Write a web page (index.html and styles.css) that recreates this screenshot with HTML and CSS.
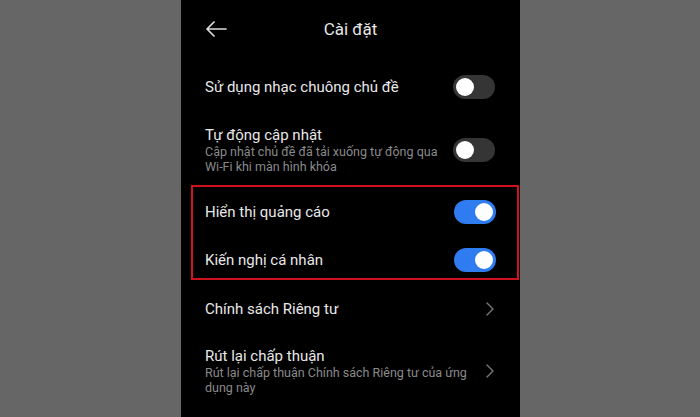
FILE: index.html
```html
<!DOCTYPE html>
<html lang="vi">
  <head>
    <meta charset="UTF-8" />
    <meta name="viewport" content="width=device-width, initial-scale=1.0" />
    <title>Cài đặt</title>
    <link rel="stylesheet" href="styles.css">
  </head>
  <body>
    <div class="screen"><!-- phone screen -->
      <div class="header">
        <svg class="back" width="22" height="16" viewBox="0 0 22 16">
          <path d="M21 8H2M9 1L2 8l7 7" fill="none" stroke="#dcdcdc" stroke-width="1.7" stroke-linecap="round" stroke-linejoin="round"/>
        </svg>
        <span class="title">Cài đặt</span>
      </div>

      <div class="row r1">
        <div class="text"><div class="name">Sử dụng nhạc chuông chủ đề</div></div>
        <span class="switch"></span>
      </div>

      <div class="row r2">
        <div class="text">
          <div class="name">Tự động cập nhật</div>
          <div class="desc">Cập nhật chủ đề đã tải xuống tự động qua<br>Wi-Fi khi màn hình khóa</div>
        </div>
        <span class="switch"></span>
      </div>

      <div class="mark"><!-- red highlight -->
        <div class="row small">
          <div class="text"><div class="name">Hiển thị quảng cáo</div></div>
          <span class="switch on"></span>
        </div>
        <div class="row small">
          <div class="text"><div class="name">Kiến nghị cá nhân</div></div>
          <span class="switch on"></span>
        </div>
      </div>

      <div class="row r3">
        <div class="text"><div class="name">Chính sách Riêng tư</div></div>
        <svg class="chev" width="8" height="14" viewBox="0 0 8 14"><path d="M1 1l6 6-6 6" fill="none" stroke="#7a7a7a" stroke-width="1.4" stroke-linecap="round" stroke-linejoin="round"/></svg>
      </div>

      <div class="row r4">
        <div class="text">
          <div class="name">Rút lại chấp thuận</div>
          <div class="desc">Rút lại chấp thuận Chính sách Riêng tư của ứng<br>dụng này</div>
        </div>
        <svg class="chev" width="8" height="14" viewBox="0 0 8 14"><path d="M1 1l6 6-6 6" fill="none" stroke="#7a7a7a" stroke-width="1.4" stroke-linecap="round" stroke-linejoin="round"/></svg>
      </div>
    </div>
  </body>
</html>
```

FILE: styles.css
```css
* {
  margin: 0;
  padding: 0;
  box-sizing: border-box;
}
body {
  background: #666666;
  height: 417px;
  overflow: hidden;
  display: flex;
  justify-content: center;
  font-family: Roboto, "Noto Sans", sans-serif;
}
.screen {   /* black phone screen */
  width: 339px;
  height: 417px;
  background: #000;
  margin-left: 1px;
  display: flex;
  flex-direction: column;
}
.header {
  height: 58px;
  display: flex;
  align-items: center;
  padding-left: 24px;
  position: relative;
}
.header .title {
  flex: 1;
  text-align: center;
  color: #e6e6e6;
  font-size: 17px;
  margin-right: 46px;
}
.row {
  display: flex;
  align-items: center;
  justify-content: space-between;
  padding: 0 25px 0 24px;
}
.r1 { height: 58px; }
.r2 { height: 68px; }
.r3 { height: 58px; }
.r4 { height: 66px; }
.name {
  color: #e8e8e8;
  font-size: 15px;
  line-height: 18px;
}
.desc {
  color: #8a8a8a;
  font-size: 12.5px;
  line-height: 15px;
}
.mark {   /* red box round the two ad rows */
  margin: 1px 1px 0 10px;
  border: 2px solid #d0121e;
  padding: 7px 0 0;
  display: flex;
  flex-direction: column;
  gap: 12px;
}
.mark .row {
  height: 36px;
  padding: 0 21px 0 12px;
}
.switch {
  width: 42px;
  height: 24px;
  border-radius: 12px;
  background: #353535;
  position: relative;
  flex-shrink: 0;
}
.switch::after {
  content: "";
  position: absolute;
  top: 3px;
  left: 3px;
  width: 18px;
  height: 18px;
  border-radius: 50%;
  background: #fff;
}
.switch.on {
  background: #2f7bf0;
}
.switch.on::after {
  left: 21px;
}
.chev {
  margin-right: 1px;
}
```
